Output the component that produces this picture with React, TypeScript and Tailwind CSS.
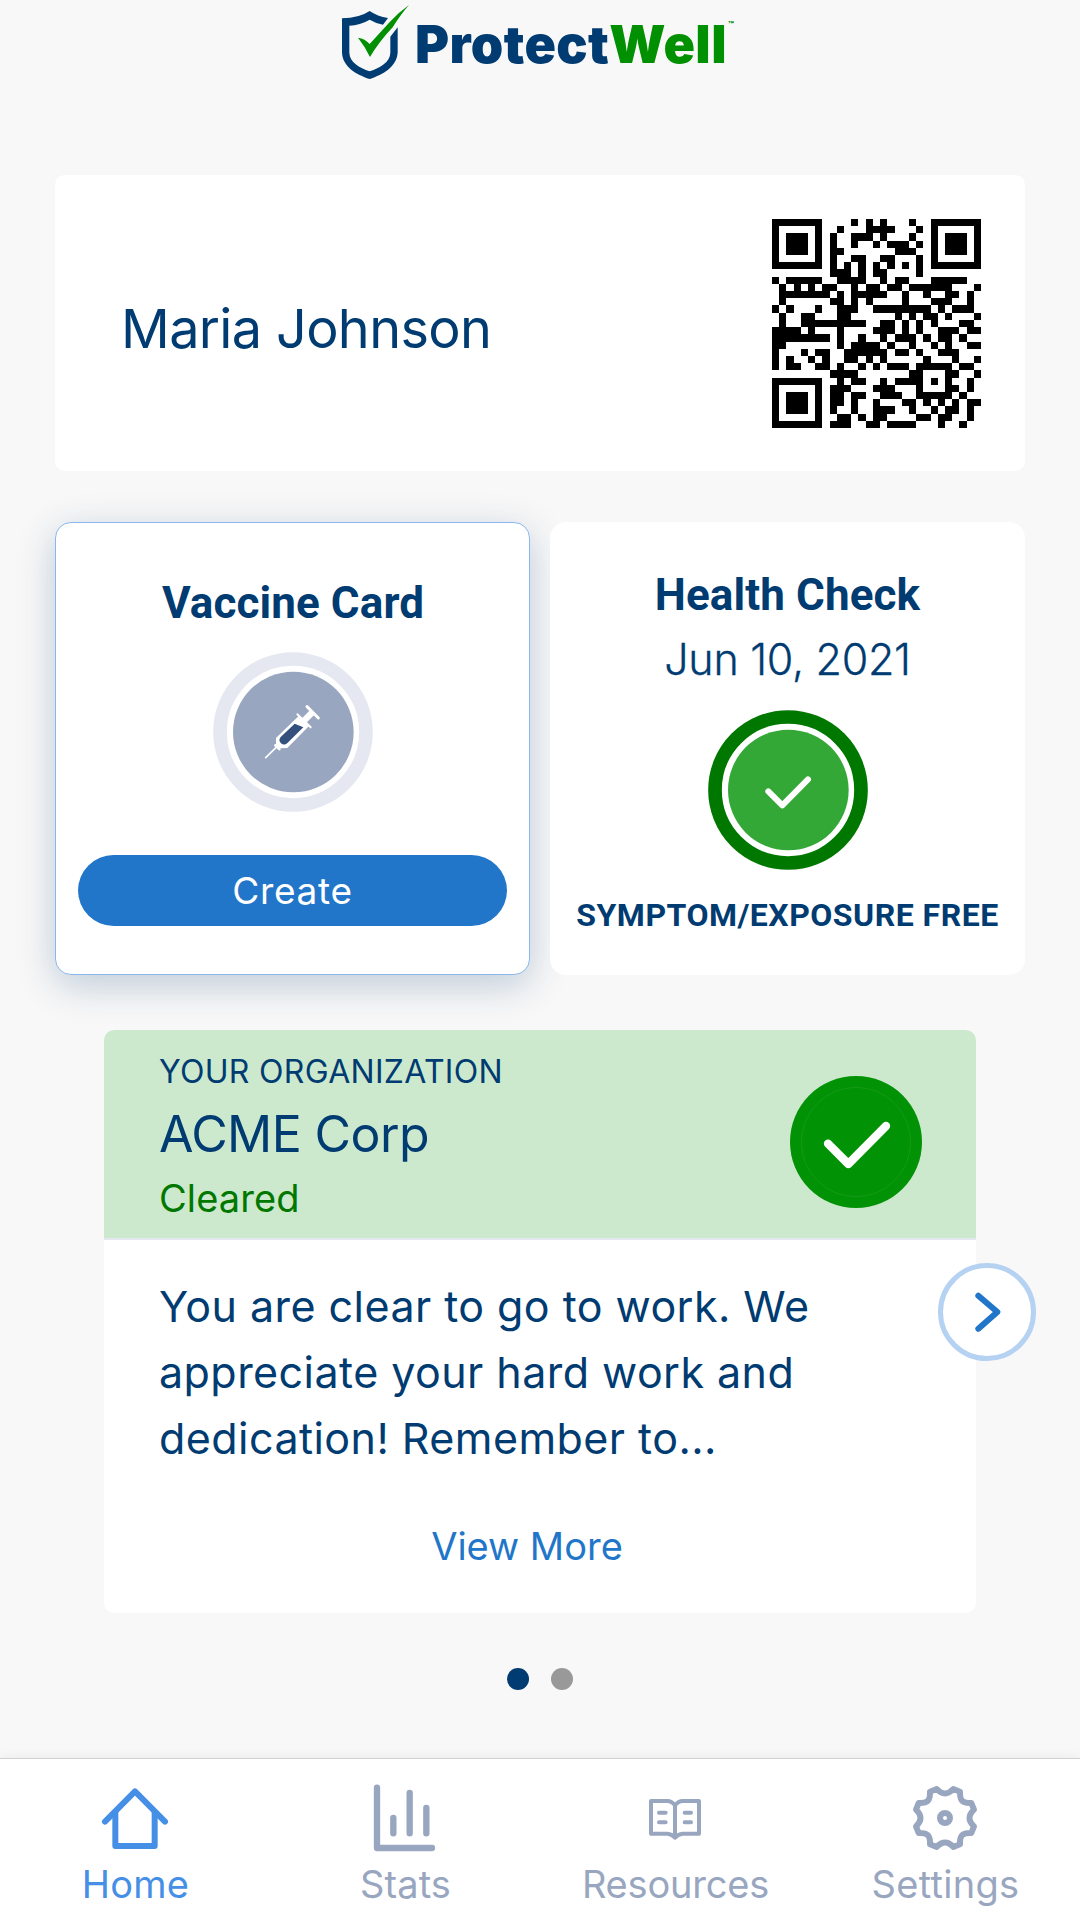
import type { ReactNode } from 'react';

// Dark modules of each QR row, as [from, to] column ranges or single columns
type Run = number | [number, number];

const FINDER_ROWS: Run[][] = [
  [[0, 6]],
  [0, 6],
  [0, [2, 4], 6],
  [0, [2, 4], 6],
  [0, [2, 4], 6],
  [0, 6],
  [[0, 6]],
];

const QR_ROWS: Run[][] = [
  [11, 13, 15, 19],
  [9, [13, 16], 20],
  [8, [11, 13], 15, 19],
  [8, 11, 14, [16, 18], 20],
  [8, 9, [17, 19]],
  [8, 11, 12, 15, 16, 20],
  [8, 10, 12, 14, 16, 18, 20],
  [[8, 10], 12, 14, 15, 20],
  [0, [2, 6], [9, 12], 15, 17, 18, [22, 26]],
  [1, 3, 5, 7, 8, 11, 13, 14, 16, 17, [19, 24], 28],
  [[1, 7], 9, [11, 15], 18, 21, 24, 25, 27],
  [1, 8, 9, 11, 13, 18, [22, 24], 27],
  [0, 2, 6, [9, 11], [14, 21], 23, [25, 27]],
  [1, 4, 5, 9, 10, 17, 19, 21, 22, 24, 28],
  [1, [4, 12], 15, 16, 18, 20, 22, 26, 27],
  [[0, 3], 5, 9, [14, 16], 18, 20, [23, 25], 27, 28],
  [[0, 7], 9, 12, 15, [17, 19], 21, 23, 24, 26],
  [0, 1, 9, [11, 14], 16, 19, 22, 24, 27, 28],
  [0, 4, 6, 7, [10, 15], 17, 18, 20, [23, 25]],
  [0, 2, 5, 7, 10, 11, 13, 15, 21, 25, 28],
  [0, 2, 3, 6, 7, 9, 12, 14, [16, 18], [20, 24], 26, 27],
  [[8, 11], 19, 20, 24, 25, 28],
  [9, 11, 12, 15, [17, 20], 22, 24, 27],
  [[8, 10], [14, 16], 20, 24, 25, 27],
  [8, 9, 11, 12, [15, 17], [20, 24], 26],
  [8, 9, 11, 14, 18, 19, 21, 23, 25, 27, 28],
  [8, 11, [14, 16], 19, 22, 24, 25, 27],
  [9, 10, 12, 14, 15, 20, 21, 23, 24, 27],
  [[8, 10], 13, 14, [16, 19], 23, 26],
];

function rowPath(runs: Run[], y: number, dx = 0) {
  return runs
    .map((run) => {
      const [from, to] = typeof run === 'number' ? [run, run] : run;
      return `M${from + dx} ${y}h${to - from + 1}v1h${from - to - 1}z`;
    })
    .join('');
}

function QrCode() {
  const d =
    QR_ROWS.map((runs, y) => rowPath(runs, y)).join('') +
    FINDER_ROWS.map((runs, y) => rowPath(runs, y) + rowPath(runs, y, 22) + rowPath(runs, y + 22)).join('');

  return (
    <svg viewBox="0 0 29 29" className="w-[209px] h-[209px]" shapeRendering="crispEdges">
      <path d={d} fill="#000" />
    </svg>
  );
}

function Logo() {
  return (
    <div className="flex h-[90px] pl-[330px]">
      <svg viewBox="0 0 240 270" className="w-[80px] h-[90px] shrink-0">
        <path
          d="M174 54 Q142 49 119 33 Q88 54 36 55 V158 C38 200 78 223 119 237 C160 223 200 200 203 158 V82 L181 110 V158 C180 187 150 203 119 214 C88 203 59 187 58 158 V77 Q90 76 119 59 Q137 70 159 74 Z"
          fill="#003b71"
        />
        <path d="M237 15 Q205 38 180 65 L119 132 Q105 116 84 113 Q104 138 120 171 Q145 128 188 82 Q213 42 237 15 Z" fill="#019001" />
      </svg>
      <div className="flex items-start pl-[5px] pt-[14px] font-black text-[52px] leading-[61px] tracking-[0.4px] whitespace-nowrap">
        <span className="text-[#003b71]">Protect</span>
        <span className="text-[#019001]">Well</span>
        <span className="text-[#019001] text-[9px] leading-[8px] tracking-normal pt-[7px] pl-[1px]">™</span>
      </div>
    </div>
  );
}

function SyringeBadge() {
  return (
    <svg viewBox="38 35 480 480" className="w-[160px] h-[160px]">
      <circle cx="278" cy="275" r="219" fill="none" stroke="#e5e8f0" strokeWidth="41" />
      <circle cx="279" cy="275" r="181" fill="#99a6bf" />
      <g stroke="#fff" fill="none" strokeLinecap="round">
        <path d="M196 352 L230 319" strokeWidth="5" />
        <path d="M225 315 L237 326" strokeWidth="8" />
        <path d="M291 222 L331 261" strokeWidth="6" />
        <path d="M310 242 L337 215" strokeWidth="19" strokeLinecap="butt" />
        <path d="M320 199 L354 233" strokeWidth="9" />
      </g>
      <path d="M227 293 L295 227 L326 257 L261 323 L238 324 L227 313 Z" fill="#fff" />
      <path d="M283 250 L309 261 L262 307 Q252 317 242 309 Q233 300 241 290 Z" fill="#34507c" />
    </svg>
  );
}

function CheckBadge() {
  return (
    <svg viewBox="503 599 480 480" className="w-[160px] h-[160px]">
      <circle cx="743" cy="839" r="219" fill="none" stroke="#007800" strokeWidth="41" />
      <circle cx="744" cy="839" r="181" fill="#34a836" />
      <path d="M684 843 L726 885 L803 807" fill="none" stroke="#fff" strokeWidth="18" strokeLinecap="round" strokeLinejoin="round" />
    </svg>
  );
}

function ClearedBadge() {
  return (
    <svg viewBox="150 198 396 396" className="w-[132px] h-[132px]">
      <circle cx="348" cy="396" r="198" fill="#019205" />
      <circle cx="348" cy="396" r="164" fill="none" stroke="#1f9d23" strokeWidth="2" />
      <path d="M264 401 L325 462 L438 348" fill="none" stroke="#fff" strokeWidth="25" strokeLinecap="round" strokeLinejoin="round" />
    </svg>
  );
}

interface TabProps {
  label: string;
  spacing: string;
  active?: boolean;
  children: ReactNode;
}

function Tab({ label, spacing, active, children }: TabProps) {
  return (
    <button className={`flex flex-col items-center pt-[24px] ${active ? 'text-[#458fe6]' : 'text-[#99a6bf]'}`}>
      {children}
      <span className={`mt-[5px] pl-[1px] text-[38px] leading-[48px] ${spacing}`}>{label}</span>
    </button>
  );
}

const tabIcon = 'w-[80px] h-[80px] -my-[4px]';

export default function App() {
  return (
    <div className="w-[1080px] h-[1920px] flex flex-col bg-[#f8f8f8] text-[#003b71] font-['Inter',sans-serif] font-normal overflow-hidden">
      <Logo />

      {/* Profile */}
      <section className="mt-[85px] mx-[55px] h-[296px] shrink-0 flex items-center justify-between rounded-[10px] bg-white pl-[66px] pr-[44px]">
        <h1 className="pt-[12px] text-[54px] leading-[64px] tracking-[-0.65px]">Maria Johnson</h1>
        <QrCode />
      </section>

      {/* Status cards */}
      <div className="mt-[51px] mx-[55px] h-[453px] shrink-0 grid grid-cols-2 gap-[20px]">
        <section className="flex flex-col items-center rounded-[16px] border border-[#8ab8ee] bg-white pt-[54px] shadow-[0_10px_38px_rgba(0,59,113,0.24)]">
          <h2 className="pl-[1px] font-['Roboto'] font-bold text-[44px] leading-[52px] tracking-[0.1px]">Vaccine Card</h2>
          <div className="mt-[23px]">
            <SyringeBadge />
          </div>
          <button className="mt-[43px] w-[429px] h-[71px] rounded-full bg-[#2176c9] text-white text-[37px] leading-[71px] tracking-[0.7px]">
            Create
          </button>
        </section>
        <section className="relative flex flex-col items-center rounded-[16px] bg-white pt-[47px]">
          <h2 className="font-['Roboto'] font-bold text-[44px] leading-[52px] tracking-[0.1px]">Health Check</h2>
          <p className="mt-[11px] text-[43px] leading-[54px] font-light tracking-[-0.3px] [-webkit-text-stroke:0.3px]">Jun 10, 2021</p>
          <div className="mt-[24px]">
            <CheckBadge />
          </div>
          <p className="mt-[25px] font-['Roboto'] font-bold text-[32px] leading-[40px] tracking-[0.5px] whitespace-nowrap">SYMPTOM/EXPOSURE FREE</p>
        </section>
      </div>

      {/* Organization carousel */}
      <section className="relative mt-[55px] mx-[104px] h-[583px] shrink-0 flex flex-col rounded-[10px] bg-white">
        <header className="h-[210px] flex items-start justify-between rounded-t-[10px] border-b-2 border-[#e5e8f0] bg-[#cde9cd] pl-[55px] pr-[54px]">
          <div className="pt-[22px] whitespace-nowrap">
            <p className="text-[32px] leading-[40px] tracking-[0.3px]">YOUR ORGANIZATION</p>
            <p className="mt-[12px] text-[50px] leading-[60px] tracking-[-0.6px]">ACME Corp</p>
            <p className="mt-[10px] text-[38px] leading-[48px] tracking-[0.1px] text-[#007800]">Cleared</p>
          </div>
          <div className="pt-[46px]">
            <ClearedBadge />
          </div>
        </header>
        <p className="mt-[33px] pl-[55px] text-[43px] leading-[66px] tracking-[0.45px] whitespace-nowrap">
          You are clear to go to work. We
          <br />
          appreciate your hard work and
          <br />
          dedication! Remember to...
        </p>
        <a className="mt-[51px] mr-[26px] self-center text-[38px] leading-[48px] text-[#2176c9]">View More</a>
        <button className="absolute left-[834px] top-[233px] w-[98px] h-[98px] flex items-center justify-center rounded-full border-[5px] border-[#b5d2f3] bg-white">
          <svg viewBox="700 840 90 132" className="w-[30px] h-[44px] ml-[2px]">
            <path d="M716 857 L773 906 L716 956" fill="none" stroke="#2176c9" strokeWidth="18" strokeLinecap="round" strokeLinejoin="round" />
          </svg>
        </button>
      </section>

      <div className="mt-[55px] flex justify-center gap-[22px]">
        <span className="w-[22px] h-[22px] rounded-full bg-[#003b71]" />
        <span className="w-[22px] h-[22px] rounded-full bg-[#999]" />
      </div>

      {/* Bottom navigation */}
      <nav className="mt-auto h-[162px] shrink-0 grid grid-cols-4 border-t border-[#d2d2d2] bg-white shadow-[0_-2px_10px_rgba(0,0,0,0.05)]">
        <Tab label="Home" spacing="tracking-[0.2px]" active>
          <svg viewBox="105 118 240 240" className={tabIcon} fill="none" stroke="currentColor" strokeWidth="18" strokeLinecap="round" strokeLinejoin="round">
            <path d="M135 246 L225 155 L315 246" />
            <path d="M166 217 V319 H284 V217" />
          </svg>
        </Tab>
        <Tab label="Stats" spacing="tracking-[0.1px]">
          <svg viewBox="915 118 240 240" className={tabIcon} fill="none" stroke="currentColor" strokeWidth="19" strokeLinecap="round" strokeLinejoin="round">
            <path d="M951 144 V325 H1116" />
            <path d="M1000 235 V281 M1049 160 V281 M1099 205 V281" />
          </svg>
        </Tab>
        <Tab label="Resources" spacing="tracking-[-0.2px]">
          <svg viewBox="225 118 240 240" className={tabIcon} fill="none" stroke="currentColor" strokeWidth="12" strokeLinecap="round" strokeLinejoin="round">
            <path d="M345 197 Q335 184 322 184 H273 V282 H322 Q335 283 345 294 Q355 283 368 282 H417 V184 H368 Q355 184 345 197 V294" />
            <path d="M297 219 H317 M297 248 H317 M374 219 H393 M374 248 H393" />
          </svg>
        </Tab>
        <Tab label="Settings" spacing="tracking-[0.3px]">
          <svg viewBox="-120 -117 240 240" className={tabIcon} fill="none" stroke="currentColor" strokeWidth="18" strokeLinejoin="round">
            <path d="M-25 -87 Q0 -60 25 -87 L45 -79 C44 -52 52 -44 79 -45 L87 -25 Q60 0 87 25 L79 45 C52 44 44 52 45 79 L25 87 Q0 60 -25 87 L-45 79 C-44 52 -52 44 -79 45 L-87 25 Q-60 0 -87 -25 L-79 -45 C-52 -44 -44 -52 -45 -79 Z" />
            <circle r="15" />
          </svg>
        </Tab>
      </nav>
    </div>
  );
}
